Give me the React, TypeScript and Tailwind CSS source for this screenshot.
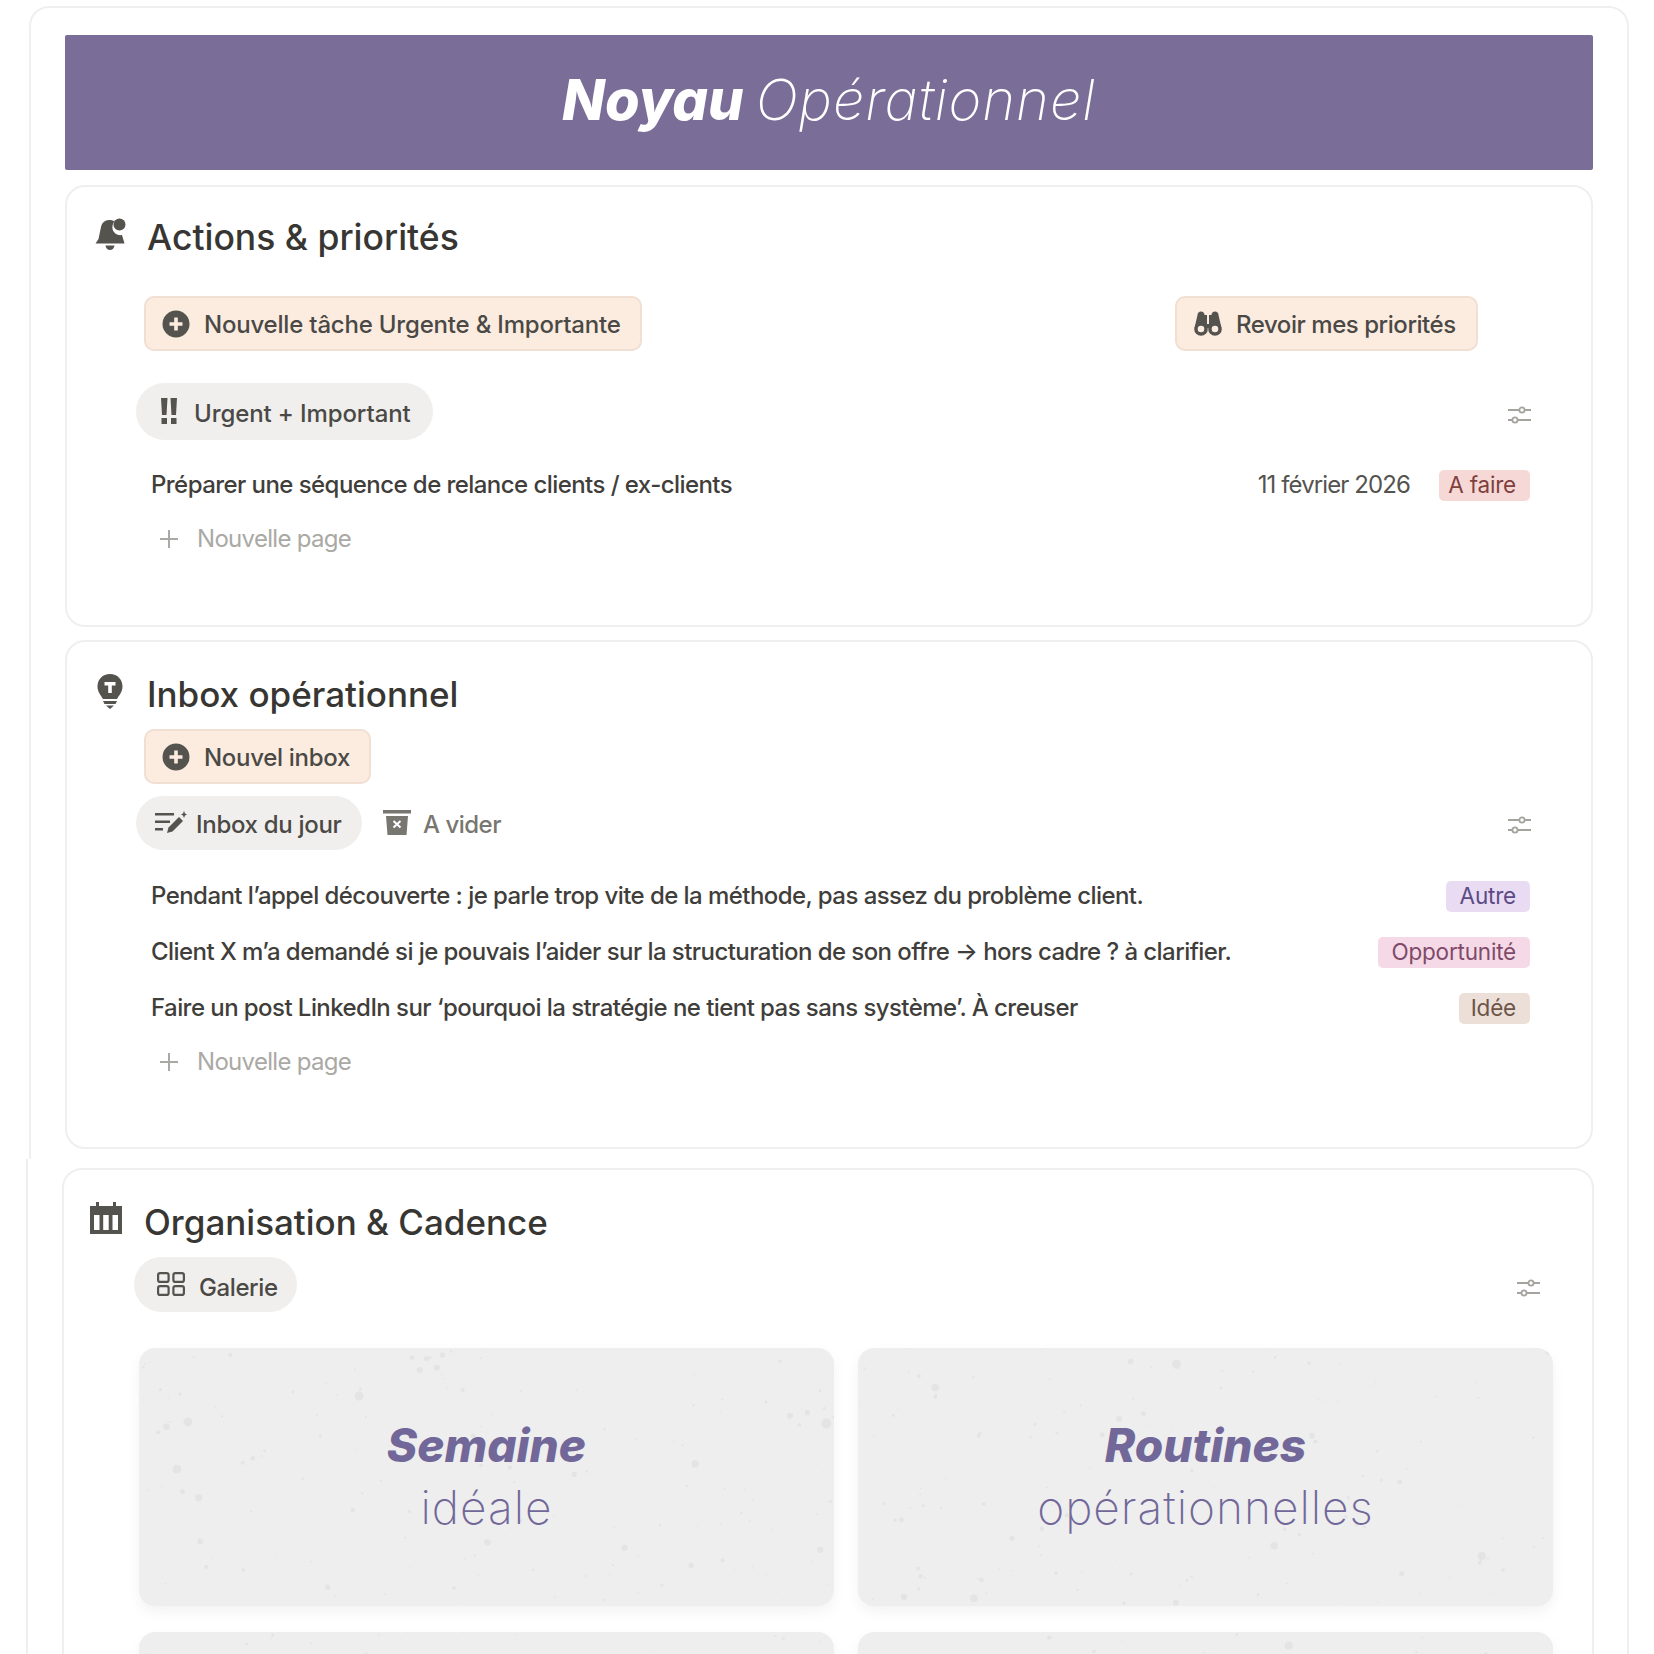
import React from "react"

const ICON = "#55534e"

function PlusCircle() {
  return (
    <svg width="28" height="28" viewBox="0 0 28 28" className="shrink-0">
      <circle cx="14" cy="14" r="13.5" fill={ICON} />
      <path d="M14 7.5v13M7.5 14h13" stroke="#fcece0" strokeWidth="3.6" />
    </svg>
  )
}

function Sliders() {
  return (
    <svg width="24" height="20" viewBox="0 0 24 20" fill="none" stroke="#a5a39e" strokeWidth="1.8">
      <path d="M1 5h11.5M17.5 5H24M1 15h4.5M10.5 15H24" />
      <circle cx="15" cy="5" r="2.6" />
      <circle cx="8" cy="15" r="2.6" />
    </svg>
  )
}

function Bell() {
  return (
    <svg width="34" height="34" viewBox="0 0 34 34" fill={ICON}>
      <path d="M15 3c-5 .5-7.500 3.500-8.200 8L4.500 22 1.500 26.500h29L28 18c-5 1-10.500-3-9.500-9 .3-2 1-3.500 2-4.500C19 3.300 17 2.800 15 3z" />
      <circle cx="25.500" cy="7.500" r="6" />
      <path d="M11.500 28.500h9c-.5 3-2.300 4.500-4.500 4.500s-4-1.500-4.500-4.500z" />
    </svg>
  )
}

function Bulb() {
  return (
    <svg width="28" height="36" viewBox="0 0 28 36" fill={ICON}>
      <path d="M14 1C6.500 1 1.500 6.500 1.500 13.500c0 5.500 3.500 9 5.500 12.500h14c2-3.500 5.500-7 5.500-12.500C26.500 6.500 21.500 1 14 1z" />
      <path d="M7 28h14l-1.500 3h-11zM10 32.500h8L14 36z" />
      <path d="M8.500 9h11v3.500h-3.700V20h-3.600v-7.500H8.500z" fill="#fff" />
    </svg>
  )
}

function Calendar() {
  return (
    <svg width="32" height="32" viewBox="0 0 32 32" fill={ICON}>
      <path d="M0 4h6V0h3v4h14V0h3v4h6v28H0z" />
      <path d="M4 13h5.500v15H4zM13.200 13h5.500v15h-5.500zM22.500 13h5.500v15h-5.500z" fill="#fff" />
    </svg>
  )
}

function Binoculars() {
  return (
    <svg width="28" height="25" viewBox="0 0 28 25" fill={ICON}>
      <path d="M3.500 4C3.500 1.800 5 .5 7 .5s3.500 1.300 3.500 3.500H13v9h2V4h2.500C17.500 1.800 19 .5 21 .5s3.500 1.300 3.500 3.500L27.500 17H.5z" />
      <circle cx="7" cy="18" r="6.800" />
      <circle cx="21" cy="18" r="6.800" />
      <circle cx="7" cy="18" r="3.300" fill="#fcece0" />
      <circle cx="21" cy="18" r="3.300" fill="#fcece0" />
    </svg>
  )
}

function Bangs() {
  return (
    <svg width="18" height="27" viewBox="0 0 18 27" fill={ICON}>
      <path d="M1 0h6.500L6.500 17H2zM10.500 0H17l-1 17h-4.500z" />
      <rect x="1.500" y="20" width="5.500" height="6" />
      <rect x="11" y="20" width="5.500" height="6" />
    </svg>
  )
}

function ListEdit() {
  return (
    <svg width="32" height="24" viewBox="0 0 32 24" fill={ICON}>
      <path d="M0 2h19v2.400H0zM0 9.500h15v2.400H0zM0 17h8v2.400H0z" />
      <path d="M12 22l1.500-5.500L24 6l4 4-10.500 10.500z" />
      <path d="M29 0l1 2.500L32 3.500 30 4.500 29 7 28 4.500 26 3.500 28 2.500z" />
    </svg>
  )
}

function ArchiveX() {
  return (
    <svg width="28" height="25" viewBox="0 0 28 25" fill="#787671">
      <rect x="0" y="0" width="28" height="3.500" />
      <path d="M3 6h22l-1.500 19h-19z" />
      <path d="M10.500 11l7 6.500M17.500 11l-7 6.500" stroke="#fff" strokeWidth="2" />
    </svg>
  )
}

function Grid() {
  return (
    <svg width="28" height="25" viewBox="0 0 28 25" fill="none" stroke={ICON} strokeWidth="2.200">
      <rect x="1.100" y="1.100" width="10.500" height="8.800" rx="2" />
      <rect x="16.400" y="1.100" width="10.500" height="8.800" rx="2" />
      <rect x="1.100" y="14.100" width="10.500" height="8.800" rx="2" />
      <rect x="16.400" y="14.100" width="10.500" height="8.800" rx="2" />
    </svg>
  )
}

function ActionButton({ icon, label, className }: { icon: React.ReactNode; label: string; className: string }) {
  return (
    <button className={`flex h-[55px] items-center rounded-[10px] border-2 border-[#f0dfd2] bg-[#fcece0] text-[24px] font-medium whitespace-nowrap text-[#4a4945] ${className}`}>
      {icon}
      <span className="pt-[2px]">{label}</span>
    </button>
  )
}

function Tag({ label, className }: { label: string; className: string }) {
  return <span className={`flex h-[31px] items-center justify-end rounded-[5px] px-[14px] text-[22.500px] tracking-[-0.2px] whitespace-nowrap ${className}`}>{label}</span>
}

function TaskRow({ text, children }: { text: string; children: React.ReactNode }) {
  return (
    <div className="flex h-[56px] items-center justify-between pl-[84px] pr-[61px]">
      <span className="text-[24px] font-medium tracking-[-0.56px] text-[#3f3e3b]">{text}</span>
      <div className="flex items-center">{children}</div>
    </div>
  )
}

function NewPage() {
  return (
    <div className="flex h-[52px] items-center pl-[92px] text-[24px] tracking-[-0.7px] text-[#aaa9a5]">
      <svg width="20" height="20" viewBox="0 0 20 20" stroke="#aaa9a5" strokeWidth="2" className="mr-[18px]">
        <path d="M10 1v18M1 10h18" />
      </svg>
      Nouvelle page
    </div>
  )
}

function Speckles({ seed }: { seed: number }) {
  // petites taches du fond des vignettes, toujours les memes
  let s = seed
  const next = () => {
    s = (s * 16807) % 2147483647
    return s / 2147483647
  }
  const dots = Array.from({ length: 190 }, () => ({ x: next() * 695, y: next() * 258, r: 0.5 + next() * next() * next() * 6 }))
  return (
    <svg viewBox="0 0 695 258" className="absolute inset-0 h-full w-full" fill="#e4e4e5">
      {dots.map((d, i) => (
        <circle key={i} cx={d.x} cy={d.y} r={d.r} />
      ))}
    </svg>
  )
}

function GalleryCard({ bold, light, seed }: { bold: string; light: string; seed: number }) {
  return (
    <div className="relative flex h-[258px] w-[695px] flex-col items-center justify-center overflow-hidden rounded-[16px] bg-[#eeeeef] pb-[2px] text-[#716899] shadow-[0_6px_14px_rgba(0,0,0,0.05)]">
      <Speckles seed={seed} />
      <span className="relative text-[46px] leading-[62px] font-extrabold italic">{bold}</span>
      <span className="relative text-[46px] leading-[62px] font-extralight tracking-[1px]">{light}</span>
    </div>
  )
}

export default function App() {
  return (
    <div className="h-[1654px] overflow-hidden bg-white font-['Inter',sans-serif]">
      <div className="mt-[6px] ml-[29px] h-[1153px] w-[1600px] rounded-t-[20px] border-2 border-b-0 border-[#efefef] pt-[27px] pl-[34px]">
        <div className="flex h-[135px] w-[1528px] items-center justify-center rounded-[2px] bg-[#7a6d98] pb-[6px] text-[56px] text-white">
          <span className="font-extrabold italic">Noyau</span>
          <span className="ml-[12px] font-extralight tracking-[1px] italic">Opérationnel</span>
        </div>

        <section className="mt-[15px] h-[442px] w-[1528px] rounded-[20px] border-2 border-[#efefef] pt-[32px]">
          <div className="flex h-[36px] items-center pl-[27px]">
            <span className="-mt-[6px] w-[53px]"><Bell /></span>
            <h2 className="pt-[2px] text-[35.500px] font-medium text-[#373633]">Actions &amp; priorités</h2>
          </div>
          <div className="mt-[41px] flex pl-[77px]">
            <ActionButton icon={<span className="mr-[14px]"><PlusCircle /></span>} label="Nouvelle tâche Urgente & Importante" className="w-[498px] pl-[16px] tracking-[-0.2px]" />
            <ActionButton icon={<span className="mr-[14px] flex"><Binoculars /></span>} label="Revoir mes priorités" className="ml-[533px] w-[303px] pl-[17px] tracking-[-0.45px]" />
          </div>
          <div className="mt-[32px] flex items-center justify-between pl-[69px] pr-[60px]">
            <div className="flex h-[57px] w-[297px] items-center rounded-full bg-[#f0efed] pl-[24px] text-[24px] font-medium tracking-[-0.1px] text-[#4a4945]">
              <span className="mr-[16px] -mt-[1px]"><Bangs /></span>
              <span className="pt-[4px]">Urgent + Important</span>
            </div>
            <span className="mt-[6px]"><Sliders /></span>
          </div>
          <div className="mt-[17px]">
            <TaskRow text="Préparer une séquence de relance clients / ex-clients">
              <span className="mr-[29px] text-[24px] tracking-[-0.9px] text-[#55534e]">11 février 2026</span>
              <Tag label="A faire" className="w-[91px] bg-[#f6d8d6] text-[#7f3f3f]" />
            </TaskRow>
          </div>
          <NewPage />
        </section>

        <section className="mt-[13px] h-[509px] w-[1528px] rounded-[20px] border-2 border-[#efefef] pt-[32px]">
          <div className="flex h-[36px] items-center pl-[29px]">
            <span className="-mt-[2px] w-[51px]"><Bulb /></span>
            <h2 className="pt-[4px] text-[35px] font-medium text-[#373633]">Inbox opérationnel</h2>
          </div>
          <div className="mt-[19px] pl-[77px]">
            <ActionButton icon={<span className="mr-[14px]"><PlusCircle /></span>} label="Nouvel inbox" className="w-[227px] pl-[16px] tracking-[-0.3px]" />
          </div>
          <div className="mt-[12px] flex items-center justify-between pl-[69px] pr-[60px]">
            <div className="flex items-center">
              <div className="flex h-[54px] w-[226px] items-center rounded-full bg-[#f0efed] pl-[19px] text-[24px] font-medium tracking-[-0.3px] text-[#4a4945]">
                <span className="mr-[9px]"><ListEdit /></span>
                <span className="pt-[3px]">Inbox du jour</span>
              </div>
              <span className="ml-[21px] mr-[12px] -mt-[2px]"><ArchiveX /></span>
              <span className="pt-[3px] text-[24px] font-medium tracking-[-0.5px] text-[#787671]">A vider</span>
            </div>
            <span className="mt-[3px]"><Sliders /></span>
          </div>
          <div className="mt-[18px]">
            <TaskRow text="Pendant l’appel découverte : je parle trop vite de la méthode, pas assez du problème client.">
              <Tag label="Autre" className="w-[84px] bg-[#e8dbf2] text-[#5c4a86]" />
            </TaskRow>
            <TaskRow text="Client X m’a demandé si je pouvais l’aider sur la structuration de son offre → hors cadre ? à clarifier.">
              <Tag label="Opportunité" className="w-[152px] bg-[#f5d9e6] text-[#7f4a6a]" />
            </TaskRow>
            <TaskRow text="Faire un post LinkedIn sur ‘pourquoi la stratégie ne tient pas sans système’. À creuser">
              <Tag label="Idée" className="w-[71px] bg-[#ecdfd8] text-[#6b5548]" />
            </TaskRow>
          </div>
          <NewPage />
        </section>
      </div>

      <div className="ml-[26px] h-[495px] w-[1603px] border-x-2 border-[#efefef] pt-[9px] pl-[34px]">
        <section className="h-[600px] w-[1532px] rounded-[20px] border-2 border-[#efefef] pt-[33px]">
          <div className="flex h-[36px] items-center pl-[26px]">
            <span className="-mt-[6px] w-[54px]"><Calendar /></span>
            <h2 className="pt-[2px] text-[35px] font-medium text-[#373633]">Organisation &amp; Cadence</h2>
          </div>
          <div className="mt-[18px] flex items-center justify-between pl-[70px] pr-[52px]">
            <div className="flex h-[55px] w-[163px] items-center rounded-full bg-[#f0efed] pl-[23px] text-[24px] font-medium tracking-[-0.4px] text-[#4a4945]">
              <span className="mr-[14px] flex"><Grid /></span>
              <span className="pt-[7px]">Galerie</span>
            </div>
            <span className="mt-[6px]"><Sliders /></span>
          </div>
          <div className="mt-[36px] grid grid-cols-[695px_695px] gap-x-[24px] gap-y-[26px] pl-[75px]">
            <GalleryCard bold="Semaine" light="idéale" seed={4231} />
            <GalleryCard bold="Routines" light="opérationnelles" seed={9173} />
            <GalleryCard bold="" light="" seed={777} />
            <GalleryCard bold="" light="" seed={3311} />
          </div>
        </section>
      </div>
    </div>
  )
}
